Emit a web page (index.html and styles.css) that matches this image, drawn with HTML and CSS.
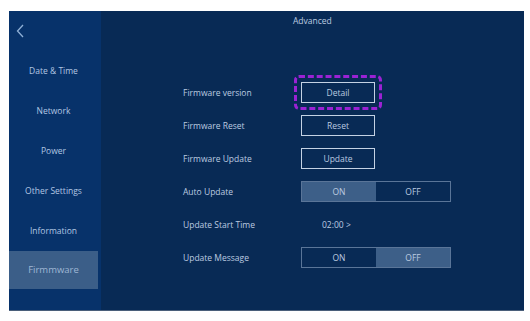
FILE: index.html
```html
<!DOCTYPE html>
<html lang="en">
<head>
    <meta charset="UTF-8">
    <title>Advanced</title>
    <link rel="stylesheet" href="styles.css">
</head>
<body>

<div class="screen">
    <div class="sidebar">
        <div class="back">
            <svg width="8" height="14" viewBox="0 0 8 14"><path d="M7 1 L1.5 7 L7 13" fill="none" stroke="#8fb0d6" stroke-width="1.3"/></svg>
        </div>
        <div class="menu">
            <div class="menu-item">Date &amp; Time</div>
            <div class="menu-item">Network</div>
            <div class="menu-item">Power</div>
            <div class="menu-item">Other Settings</div>
            <div class="menu-item">Information</div>
            <div class="menu-item active">Firmmware</div>
        </div>
    </div>

    <div class="main">
        <div class="title">Advanced</div>
        <div class="rows">
            <div class="row">
                <span class="label">Firmware version</span>
                <span class="highlight"><span class="btn">Detail</span></span>
            </div>
            <div class="row">
                <span class="label">Firmware Reset</span>
                <span class="btn">Reset</span>
            </div>
            <div class="row">
                <span class="label">Firmware Update</span>
                <span class="btn">Update</span>
            </div>
            <div class="row">
                <span class="label">Auto Update</span>
                <div class="toggle">
                    <span class="seg on">ON</span>
                    <span class="seg">OFF</span>
                </div>
            </div>
            <div class="row">
                <span class="label">Update Start Time</span>
                <span class="time">02:00 &gt;</span>
            </div>
            <div class="row">
                <span class="label">Update Message</span>
                <div class="toggle">
                    <span class="seg">ON</span>
                    <span class="seg on">OFF</span>
                </div>
            </div>
        </div>
    </div>
</div>

</body>
</html>
```

FILE: styles.css
```css
* {
    box-sizing: border-box;
    margin: 0;
    padding: 0;
}

body {
    background-color: #ffffff;
    font-family: "Open Sans", "Noto Sans", sans-serif;
    font-size: 8.5px;
    color: #bccbe0;
    padding: 11px 6px 10px 9px;
}

.screen {
    display: flex;
    width: 515px;
    height: 300px;
    background-color: #082a55;
    border-bottom: 1px solid #4a5f7a;
}

/* left menu */
.sidebar {
    width: 92px;
    background-color: #07326a;
    display: flex;
    flex-direction: column;
}

.back {
    height: 40px;
    padding: 13px 0 0 7px;
}

.menu-item {
    height: 40px;
    line-height: 40px;
    text-align: center;
    color: #b2c6e2;
    margin-right: 3px;
}

.menu-item.active {
    background-color: #3b5e88;
    height: 38px;
    line-height: 38px;
    color: #9fb7d4;
    font-size: 9.5px;
}

/* right panel */
.main {
    flex: 1;
    padding-left: 82px;
}

.title {
    padding: 4px 0 0 110px;
    height: 71px;
}

.rows {
    display: flex;
    flex-direction: column;
    gap: 12px;
}

.row {
    display: flex;
    align-items: center;
    height: 21px;
}

.label {
    width: 118px;
}

.highlight {
    margin: -7px;
    padding: 4px;
    border: 3px dashed #9a22d4;
    border-radius: 5px;
    display: inline-flex;
}

.btn {
    width: 74px;
    height: 21px;
    border: 1px solid #c4d2e4;
    display: flex;
    align-items: center;
    justify-content: center;
}

.toggle {
    display: flex;
    width: 150px;
    height: 21px;
    border: 1px solid #5a7598;
}

.seg {
    flex: 1;
    display: flex;
    align-items: center;
    justify-content: center;
}

.seg.on {
    background-color: #3d5f88;
}

.time {
    padding-left: 21px;
}
```
